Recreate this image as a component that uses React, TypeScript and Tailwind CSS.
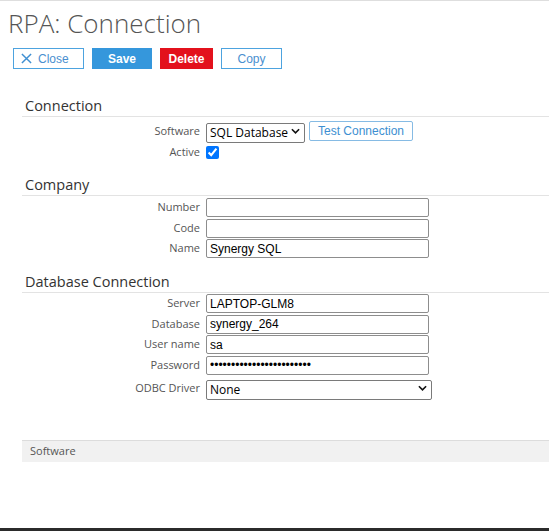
import { useState } from "react";

const SANS = "font-['Open_Sans','Noto_Sans',sans-serif]";
const ARIAL = "font-['Liberation_Sans',Arial,sans-serif]";

function Chevron() {
  return (
    <svg viewBox="0 0 10 6" className="pointer-events-none absolute right-[5px] top-1/2 h-[6px] w-[9px] -translate-y-1/2">
      <path d="M1 1l4 4 4-4" fill="none" stroke="#111" strokeWidth="1.8" />
    </svg>
  );
}

function Heading({ title, mt }: { title: string; mt: string }) {
  return (
    <div className={`${mt} h-[21px] border-b border-[#e3e3e3] pl-[3px] text-[14.5px] leading-[20px] text-[#333] ${SANS}`}>
      {title}
    </div>
  );
}

function Row({ label, children, className = "" }: { label: string; children: React.ReactNode; className?: string }) {
  return (
    <div className={`grid grid-cols-[178px_1fr] items-center gap-x-[6px] ${className}`}>
      <span className={`text-right text-[11px] text-[#555] ${SANS}`}>{label}</span>
      <div className="flex items-center">{children}</div>
    </div>
  );
}

function TextInput({ value, type = "text" }: { value: string; type?: string }) {
  return (
    <input
      type={type}
      defaultValue={value}
      className={`h-[19px] w-[223px] rounded-[2px] border border-[#8d8d8d] px-[3px] text-[12px] text-black outline-none ${ARIAL}`}
    />
  );
}

export default function App() {
  const [active, setActive] = useState(true);

  return (
    <div className="flex h-[531px] w-full flex-col border-t border-[#dedede] bg-white">
      <div className="flex-1">
        <h1 className={`mt-[7px] pl-[8px] text-[26px] font-light leading-[30px] text-[#555] ${SANS}`}>RPA: Connection</h1>

        <div className={`mt-[10px] flex gap-[8px] pl-[13px] text-[12px] ${ARIAL}`}>
          <button className="flex h-[21px] w-[71px] items-center gap-[6px] border border-[#4da3df] bg-white pl-[7px] text-[#4a8fcf]">
            <svg viewBox="0 0 12 12" className="h-[11px] w-[11px]">
              <path d="M1 1l10 10M11 1L1 11" stroke="#3f8fd2" strokeWidth="1.6" />
            </svg>
            Close
          </button>
          <button className="h-[21px] w-[60px] bg-[#3597dc] font-bold text-white">Save</button>
          <button className="h-[21px] w-[53px] bg-[#e3111c] font-bold text-white">Delete</button>
          <button className="h-[21px] w-[61px] border border-[#4da3df] bg-white text-[#4a8fcf]">Copy</button>
        </div>

        <div className="ml-[22px]">
          <Heading title="Connection" mt="mt-[27px]" />
          <Row label="Software" className="mt-[2px] h-[20px]">
            <div className="relative">
              <select
                defaultValue="sql"
                className={`h-[20px] w-[99px] appearance-none rounded-[2px] border border-[#7a7a7a] pl-[3px] text-[12px] text-black outline-none ${SANS}`}
              >
                <option value="sql">SQL Database</option>
              </select>
              <Chevron />
            </div>
            <button className={`ml-[4px] h-[20px] w-[104px] rounded-[2px] border border-[#86bbe4] bg-white text-[12px] text-[#3d8fd1] ${ARIAL}`}>
              Test Connection
            </button>
          </Row>
          <Row label="Active" className="mt-[5px] h-[15px]">
            <input
              type="checkbox"
              checked={active}
              onChange={(e) => setActive(e.target.checked)}
              className="m-0 h-[13px] w-[13px] accent-[#0075ff]"
            />
          </Row>

          <Heading title="Company" mt="mt-[16px]" />
          <div className="mt-[2px] flex flex-col gap-[1.5px]">
            <Row label="Number"><TextInput value="" /></Row>
            <Row label="Code"><TextInput value="" /></Row>
            <Row label="Name"><TextInput value="Synergy SQL" /></Row>
          </div>

          <Heading title="Database Connection" mt="mt-[14px]" />
          <div className="mt-[1px] flex flex-col gap-[1.5px]">
            <Row label="Server"><TextInput value="LAPTOP-GLM8" /></Row>
            <Row label="Database"><TextInput value="synergy_264" /></Row>
            <Row label="User name"><TextInput value="sa" /></Row>
            <Row label="Password"><TextInput type="password" value="aaaaaaaaaaaaaaaaaaaaaaaa" /></Row>
            <Row label="ODBC Driver">
              <div className="relative">
                <select
                  defaultValue="none"
                  className={`h-[20px] w-[226px] appearance-none rounded-[2px] border border-[#7a7a7a] pl-[3px] text-[12px] text-black outline-none ${SANS}`}
                >
                  <option value="none">None</option>
                </select>
                <Chevron />
              </div>
            </Row>
          </div>

          <div className={`mt-[40px] flex h-[22px] items-center border-t border-[#dcdcdc] bg-[#f1f1f1] pl-[8px] text-[11px] text-[#555] ${SANS}`}>
            Software
          </div>
        </div>
      </div>
      <div className="h-[3px] bg-[#2b2b2b]" />
    </div>
  );
}
